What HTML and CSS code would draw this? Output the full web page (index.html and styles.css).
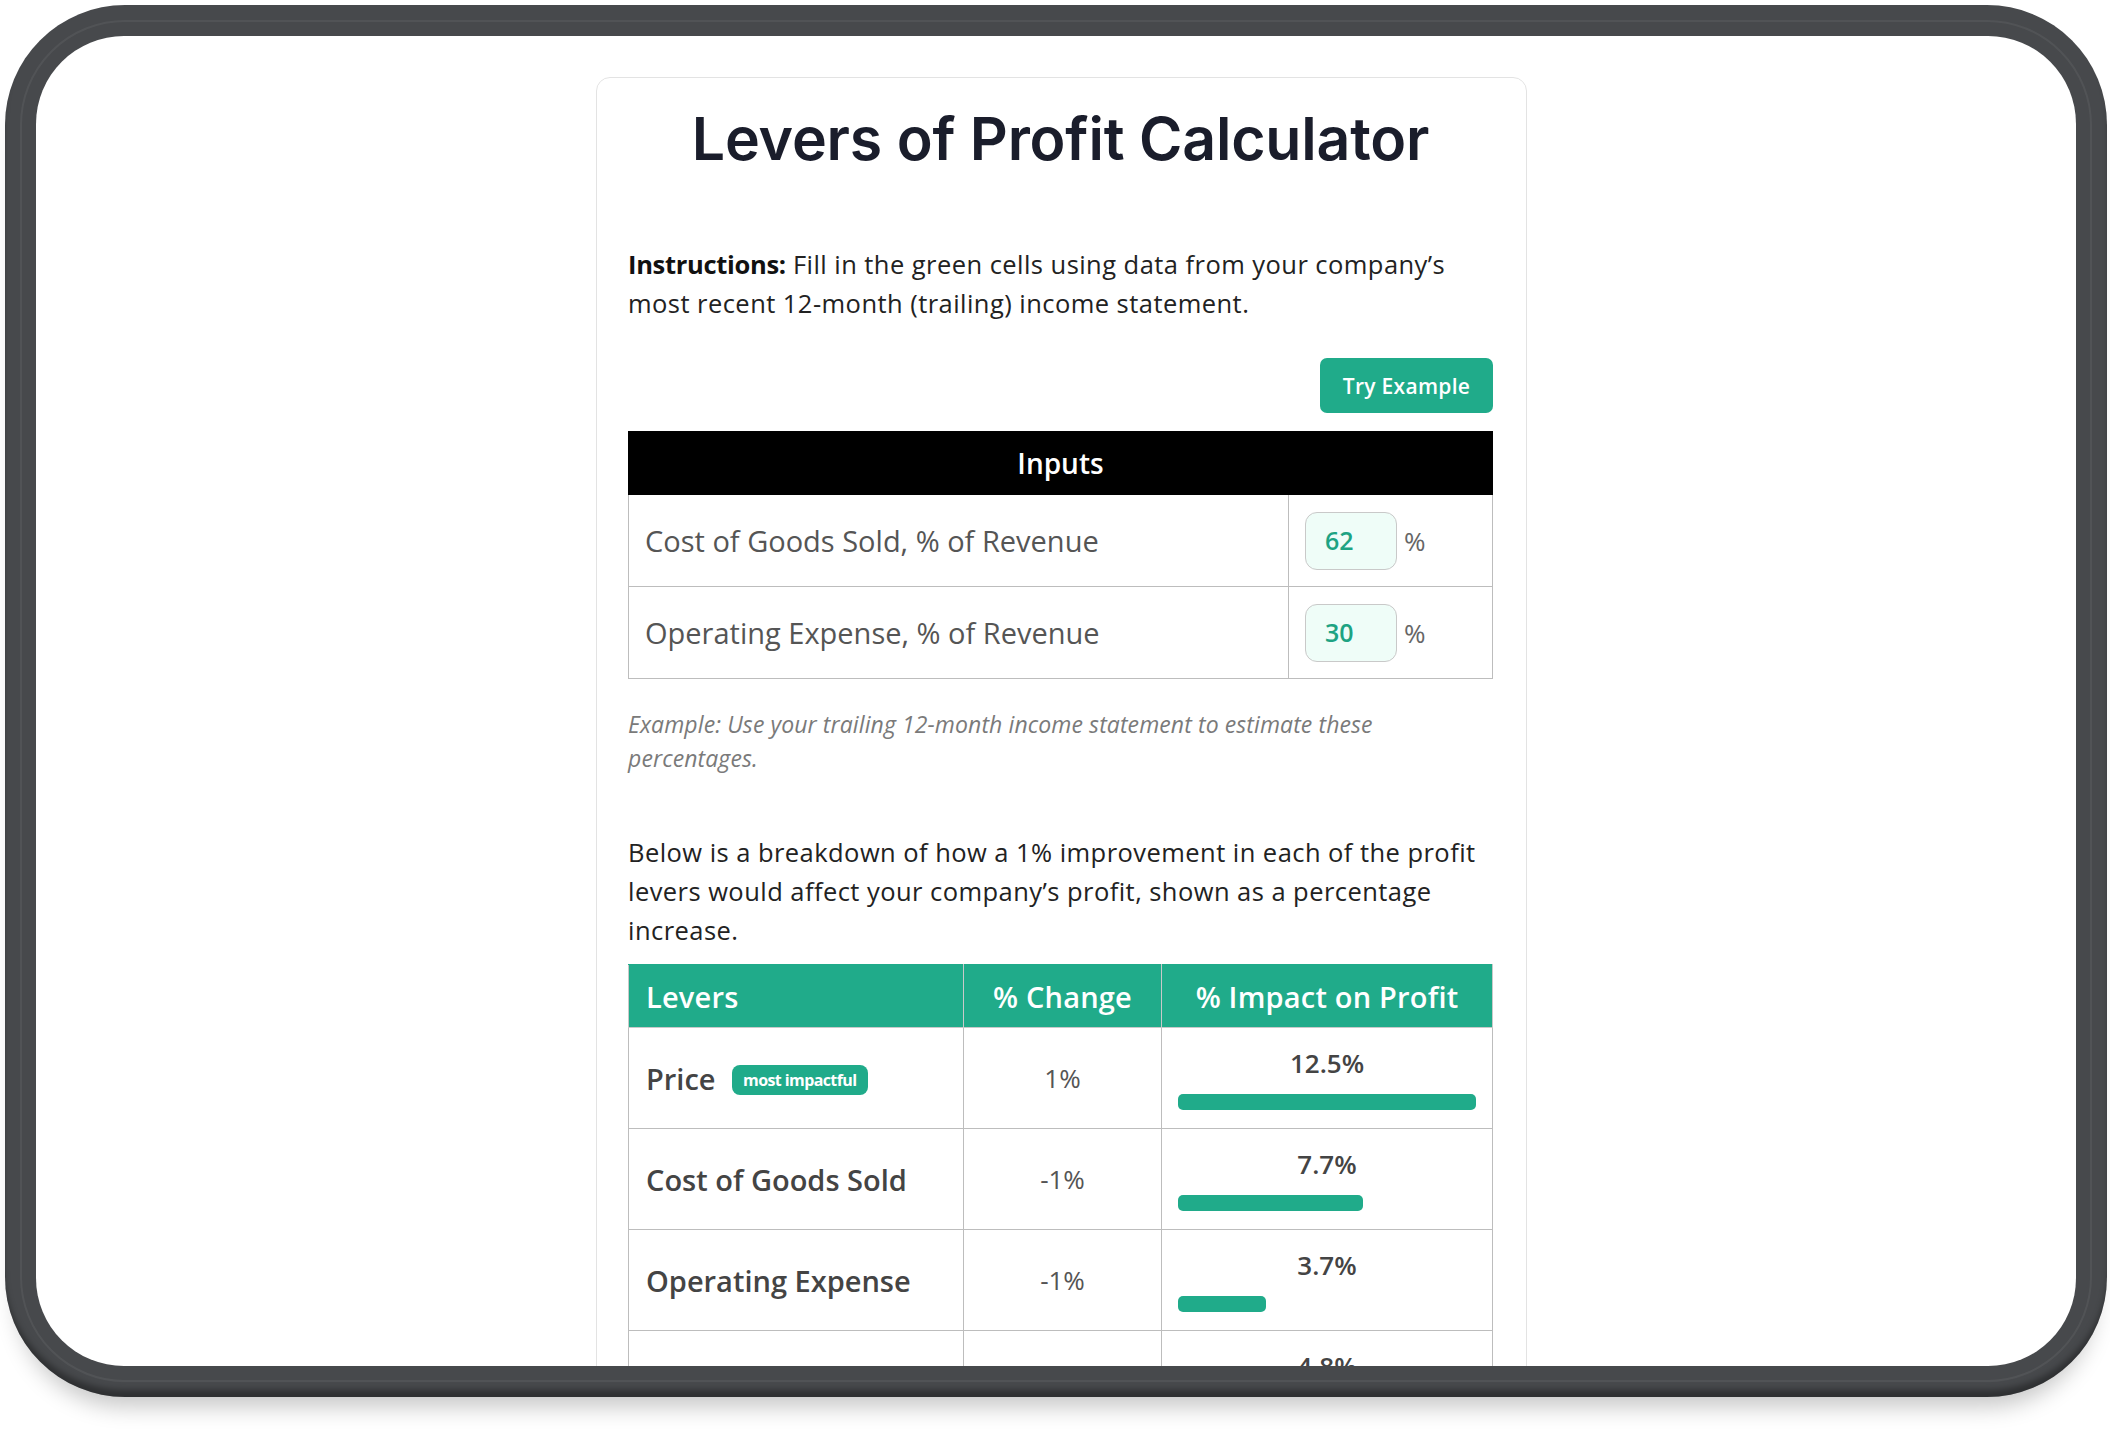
FILE: index.html
```html
<!DOCTYPE html>
<html lang="en">
<head>
<meta charset="utf-8">
<title>Levers of Profit Calculator</title>
<link rel="stylesheet" href="styles.css">
</head>
<body>
<div class="device">
  <span class="hw-btn top-a"></span>
  <span class="hw-btn top-b"></span>
  <span class="hw-btn side"></span>
  <div class="screen">
    <div class="card">
      <h1 class="title">Levers of Profit Calculator</h1>
      <p class="instructions"><strong>Instructions:</strong> Fill in the green cells using data from your company’s most recent 12-month (trailing) income statement.</p>
      <div class="actions"><button class="try-btn" type="button">Try Example</button></div>
      <table class="inputs">
        <thead>
          <tr><th colspan="2">Inputs</th></tr>
        </thead>
        <tbody>
          <tr>
            <td class="in-label">Cost of Goods Sold, % of Revenue</td>
            <td class="in-value"><span class="in-box">62</span><span class="pct">%</span></td>
          </tr>
          <tr>
            <td class="in-label">Operating Expense, % of Revenue</td>
            <td class="in-value"><span class="in-box">30</span><span class="pct">%</span></td>
          </tr>
        </tbody>
      </table>
      <p class="caption">Example: Use your trailing 12-month income statement to estimate these percentages.</p>
      <p class="lead">Below is a breakdown of how a 1% improvement in each of the profit levers would affect your company’s profit, shown as a percentage increase.</p>
      <table class="levers">
        <thead>
          <tr>
            <th class="c-lever">Levers</th>
            <th class="c-change">% Change</th>
            <th class="c-impact">% Impact on Profit</th>
          </tr>
        </thead>
        <tbody>
          <tr>
            <td class="lever">Price <span class="badge">most impactful</span></td>
            <td class="change">1%</td>
            <td class="impact"><div class="num">12.5%</div><div class="track"><div class="bar" style="width:100%"></div></div></td>
          </tr>
          <tr>
            <td class="lever">Cost of Goods Sold</td>
            <td class="change">-1%</td>
            <td class="impact"><div class="num">7.7%</div><div class="track"><div class="bar" style="width:62%"></div></div></td>
          </tr>
          <tr>
            <td class="lever">Operating Expense</td>
            <td class="change">-1%</td>
            <td class="impact"><div class="num">3.7%</div><div class="track"><div class="bar" style="width:29.6%"></div></div></td>
          </tr>
          <tr>
            <td class="lever">Volume</td>
            <td class="change">1%</td>
            <td class="impact"><div class="num">4.8%</div><div class="track"><div class="bar" style="width:38.4%"></div></div></td>
          </tr>
        </tbody>
      </table>
    </div>
  </div>
</div>
</body>
</html>
```
FILE: styles.css
```css
html, body {
  margin: 0;
  padding: 0;
  background: #ffffff;
}
body {
  width: 2110px;
  height: 1440px;
  overflow: hidden;
  font-family: "Open Sans", "Noto Sans", sans-serif;
}

/* ---------- device frame ---------- */
.device {
  position: relative;
  box-sizing: border-box;
  width: 2102px;
  height: 1392px;
  margin: 5px 0 0 5px;
  padding: 31px;
  background: #47494c;
  border-radius: 120px;
  box-shadow:
    inset 0 -9px 6px -2px rgba(0, 0, 0, 0.35),
    0 22px 22px -12px rgba(0, 0, 0, 0.22);
}
.device::before {
  content: "";
  position: absolute;
  inset: 15px;
  border-radius: 105px;
  border: 2px solid rgba(255, 255, 255, 0.06);
  pointer-events: none;
}
.hw-btn {
  position: absolute;
  z-index: -1;
  background: #4b4d50;
  border-radius: 3px;
}
.hw-btn.top-a { top: -5px; left: 139px; width: 118px; height: 10px; }
.hw-btn.top-b { top: -5px; left: 278px; width: 118px; height: 10px; }
.hw-btn.side  { top: 159px; left: -5px; width: 10px; height: 136px; }

.screen {
  position: relative;
  width: 2040px;
  height: 1330px;
  background: #ffffff;
  border-radius: 88px;
  overflow: hidden;
}

/* ---------- card ---------- */
.card {
  box-sizing: border-box;
  width: 931px;
  margin: 41px 0 0 560px;
  padding: 25px 33px 40px 31px;
  border: 1.5px solid #e3e3e3;
  border-radius: 14px;
  background: #fff;
}
.title {
  margin: 0;
  font-family: Inter, "Open Sans", sans-serif;
  font-weight: 600;
  font-size: 59px;
  line-height: 72px;
  text-align: center;
  color: #1a1d2b;
  letter-spacing: -0.2px;
}
.instructions {
  margin: 70px 0 0;
  font-size: 25.5px;
  line-height: 39px;
  letter-spacing: 0.45px;
  color: #222;
}
.instructions strong {
  font-weight: 700;
  color: #111;
  letter-spacing: -0.3px;
}
.actions {
  display: flex;
  justify-content: flex-end;
  margin-top: 35px;
}
.try-btn {
  width: 173px;
  height: 55px;
  border: none;
  border-radius: 7px;
  background: #20ab8a;
  color: #fff;
  font-family: "Open Sans", sans-serif;
  font-weight: 600;
  font-size: 21px;
  letter-spacing: 0.3px;
  padding: 0;
}

/* ---------- inputs table ---------- */
.inputs {
  width: 100%;
  margin-top: 18px;
  border-collapse: collapse;
}
.inputs th {
  height: 62px;
  padding: 0;
  background: #000;
  color: #fff;
  font-weight: 600;
  font-size: 28px;
  border: 1px solid #000;
}
.inputs td {
  height: 91px;
  border: 1.5px solid #bdbdbd;
  padding: 0;
}
.in-label {
  width: 643px;
  padding-left: 16px !important;
  font-size: 29px;
  color: #555;
}
.in-value {
  padding-left: 16px !important;
  white-space: nowrap;
  line-height: 1;
}
.in-box {
  display: inline-flex;
  align-items: center;
  box-sizing: border-box;
  width: 92px;
  height: 58px;
  padding-left: 19px;
  vertical-align: middle;
  border: 1.5px solid #c9c9c9;
  border-radius: 12px;
  background: #effdf8;
  color: #1ea383;
  font-weight: 600;
  font-size: 25px;
}
.pct {
  display: inline-block;
  margin-left: 7px;
  vertical-align: middle;
  font-size: 26px;
  color: #666;
}

/* ---------- text ---------- */
.caption {
  margin: 28px 0 0;
  font-style: italic;
  font-size: 23px;
  line-height: 34px;
  letter-spacing: 0.1px;
  color: #7a7a7a;
}
.lead {
  margin: 58px 0 0;
  font-size: 25.5px;
  line-height: 39px;
  letter-spacing: 0.45px;
  color: #222;
}

/* ---------- levers table ---------- */
.levers {
  width: 100%;
  margin-top: 14px;
  border-collapse: collapse;
  table-layout: fixed;
}
.levers th {
  height: 62px;
  padding: 0;
  background: #20ab8a;
  color: #fff;
  font-weight: 600;
  font-size: 29px;
  letter-spacing: 0.2px;
  border: 1.5px solid #c9c9c9;
  border-top-color: #20ab8a;
}
.levers th.c-lever { width: 317px; text-align: left; padding-left: 17px; }
.levers th.c-change { width: 197px; }
.levers td {
  height: 100px;
  border: 1.5px solid #bdbdbd;
  padding: 0;
  color: #444;
}
.lever {
  padding-left: 17px !important;
  font-weight: 600;
  font-size: 29px;
}
.badge {
  display: inline-block;
  margin-left: 9px;
  padding: 0 11px;
  height: 30px;
  line-height: 30px;
  vertical-align: 4px;
  border-radius: 8px;
  background: #20ab8a;
  color: #fff;
  font-weight: 700;
  font-size: 16px;
  letter-spacing: -0.6px;
}
.change {
  text-align: center;
  font-size: 26px;
  color: #555 !important;
}
.impact {
  padding: 0 16px !important;
  text-align: center;
}
.num {
  font-weight: 600;
  font-size: 26px;
  line-height: 32px;
  color: #444;
}
.track {
  margin-top: 15px;
  height: 16px;
  text-align: left;
}
.bar {
  height: 16px;
  border-radius: 5px;
  background: #20ab8a;
}
```
